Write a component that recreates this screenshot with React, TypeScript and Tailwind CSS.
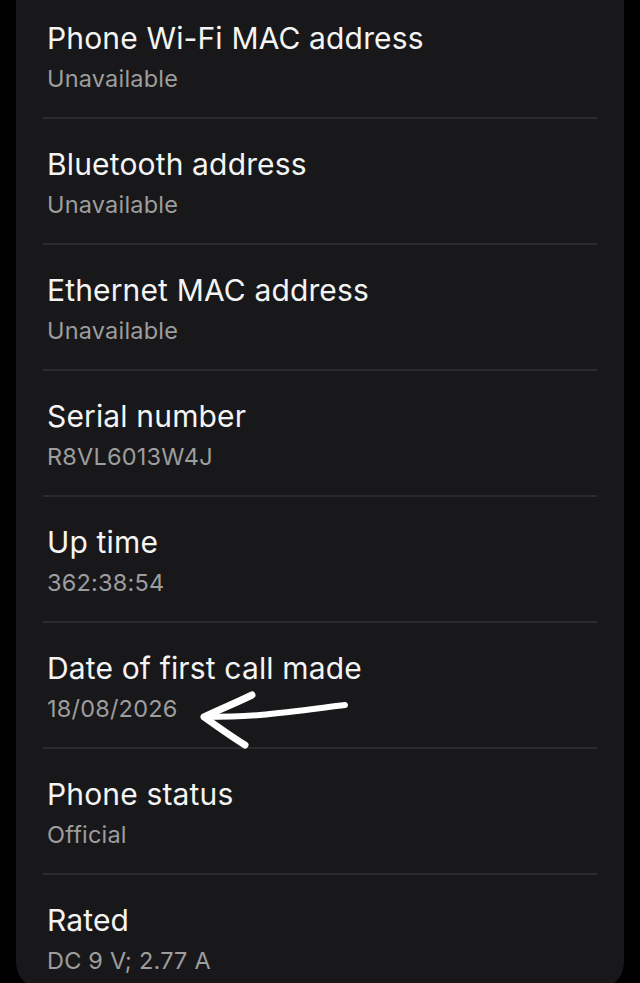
import React from "react";

const rows: { title: string; value: string }[] = [
  { title: "Phone Wi-Fi MAC address", value: "Unavailable" },
  { title: "Bluetooth address", value: "Unavailable" },
  { title: "Ethernet MAC address", value: "Unavailable" },
  { title: "Serial number", value: "R8VL6013W4J" },
  { title: "Up time", value: "362:38:54" },
  { title: "Date of first call made", value: "18/08/2026" },
  { title: "Phone status", value: "Official" },
  { title: "Rated", value: "DC 9 V; 2.77 A" },
];

function Arrow() {
  return (
    <svg
      className="absolute"
      style={{ left: 143, top: -9 }}
      width="170"
      height="70"
      viewBox="190 685 170 70"
      fill="none"
    >
      <path
        d="M345 705 C 320 708, 290 712, 260 715 C 235 717, 215 717, 204 717"
        stroke="#ffffff"
        strokeWidth="6"
        strokeLinecap="round"
        strokeLinejoin="round"
      />
      <path
        d="M252 695 C 236 703, 218 710, 204 717 C 218 727, 232 737, 245 745"
        stroke="#ffffff"
        strokeWidth="7"
        strokeLinecap="round"
        strokeLinejoin="round"
      />
    </svg>
  );
}

export default function App() {
  return (
    <div
      className="h-[983px] w-[640px] overflow-hidden bg-black"
      style={{ fontFamily: "Inter, Roboto, sans-serif" }}
    >
      <div className="mx-[16px] h-[990px] rounded-b-[28px] bg-[#18181a]">
        {rows.map((r, i) => (
          <div key={r.title}>
            {i > 0 && <div className="mx-[27px] h-[2px] bg-[#2b2b2d]" />}
            <div
              className={`px-[31px] ${i === 0 ? "pt-[20px]" : "pt-[27px]"} pb-[23px]`}
            >
              <div className="text-[30px] leading-[36px] tracking-[0.15px] text-[#f4f4f4]">
                {r.title}
              </div>
              <div className="relative mt-[8px] text-[23.5px] leading-[30px] tracking-[0.2px] text-[#9d9d9d]">
                {r.value}
                {i === 5 && <Arrow />}
              </div>
            </div>
          </div>
        ))}
      </div>
    </div>
  );
}
